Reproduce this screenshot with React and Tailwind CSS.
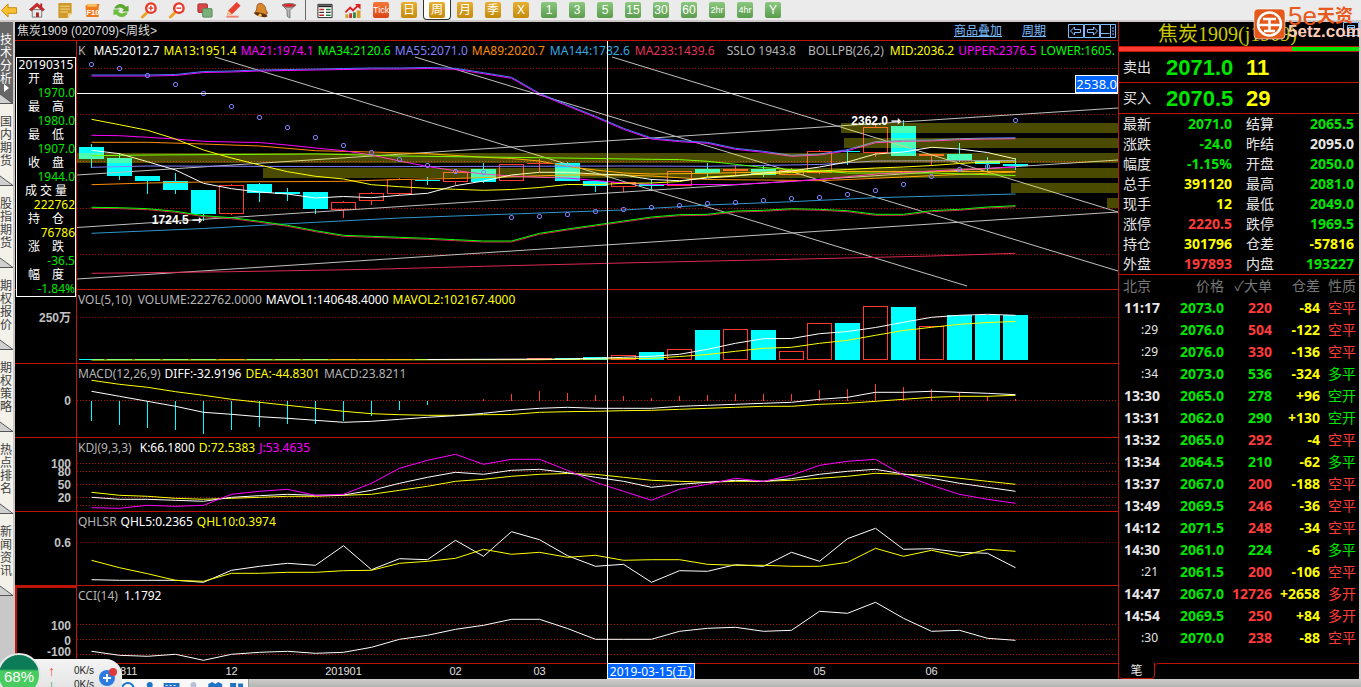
import clsx from 'clsx';

const cx = (i) => 91.5 + 28 * i;
const PLOT_X = 77;
const PLOT_W = 1041;

// values: a list of y, or of [index, y] where the series is sparse
const points = (values) =>
  values.map((v, i) => (Array.isArray(v) ? `${cx(v[0])},${v[1]}` : `${cx(i)},${v}`)).join(' ');

const UP = '#ff3b30';
const DOWN = '#00ffff';

// [direction, body top, body bottom, wick top, wick bottom]
const candles = [
  ['d', 147, 159, 144, 168], ['d', 158, 176, 153, 180], ['d', 176, 181, 176, 194], ['d', 181, 190, 173, 194],
  ['d', 190, 214, 190, 221], ['u', 185, 214, 184, 215], ['d', 184, 193, 183, 202], ['d', 192, 194, 188, 201],
  ['d', 192, 209, 192, 214], ['u', 202, 210, 201, 218], ['u', 193, 201, 192, 205], ['u', 179, 194, 178, 195],
  ['d', 180, 181, 177, 185], ['u', 172, 182, 171, 185], ['d', 169, 182, 163, 183], ['u', 164, 181, 164, 181],
  ['u', 163, 164, 159, 172], ['d', 163, 181, 162, 181], ['d', 181, 186, 181, 192], ['u', 182, 187, 182, 192],
  ['d', 184, 186, 179, 191], ['u', 171, 186, 171, 186], ['d', 169, 173, 163, 177], ['u', 169, 171, 165, 176],
  ['d', 169, 175, 166, 177], ['u', 170, 175, 168, 175], ['u', 151, 173, 150, 174], ['d', 151, 152, 149, 165],
  ['u', 127, 153, 125, 157], ['d', 126, 156, 120, 156], ['u', 154, 156, 154, 166], ['d', 154, 160, 143, 162],
  ['d', 161, 164, 157, 171], ['d', 164, 166, 158, 170],
];

const bands = [[841, 123], [844, 138], [77, 153], [263, 168], [1011, 183], [1107, 198]];

const trends = [
  [215, 57, 967, 286], [415, 57, 1118, 271], [612, 57, 1118, 212],
  [77, 175, 1118, 108], [77, 227.5, 1118, 160], [77, 279, 1118, 212],
];

const bollUpper = [75, 75, 75, 74.5, 71.5, 71, 70, 69.5, 69, 68.5, 68, 68, 67.5, 68.3, 72.7, 77.3, 93.3, 105, 116.3, 128.3, 138, 140.7, 142.3, 148.3, 151.3, 155.3, 154, 149.7, 141.7, 140.3, 140, 138.7, 138, 137.7];
const bollLower = [207.3, 207.7, 208.7, 211.3, 215.7, 217.7, 221.3, 225.3, 230.7, 235.3, 236.3, 237.3, 238.3, 239.7, 241, 241, 233.3, 229, 225, 221, 217, 214.7, 214.3, 211, 210.3, 208.7, 209.3, 210.7, 214.3, 214.3, 210.7, 209.3, 207, 205.7];

const mainLines = [
  ['#dc2850', [[0, 273.3], [5, 271.7], [10, 269.3], [14, 266.3], [20, 262.3], [25, 259.3], [30, 256], [33, 253.3]]],
  ['#2e96cc', [[0, 233.3], [4, 228.5], [8, 222.3], [11, 218], [14, 215], [19, 210], [22, 205], [25, 201.7], [28, 197.7], [33, 194]]],
  ['#ff8c00', [[0, 142.3], [2, 142.3], [4, 144], [6, 146], [8, 150.7], [10, 152], [12, 153.7], [14, 157.3], [15, 158.5], [16, 161], [17, 166.5], [18, 170], [19, 173], [20, 174], [22, 173.3], [25, 171.5], [29, 171.5], [33, 171.5]]],
  ['#ff8c00', [[0, 184.7], [2, 183], [4, 182], [8, 181.5], [9, 181.3], [11, 179.5], [13, 178.5], [15, 176.7], [17, 175], [19, 175], [20, 176], [22, 179.5], [24, 180], [26, 180.7], [28, 178.3], [30, 175.7], [33, 172]]],
  ['#8080ff', [[0, 167.3], [2, 166], [10, 166.7], [19, 166], [22, 166.3], [26, 164.5], [28, 161], [33, 160.5]]],
  ['#44ff00', [[0, 155.7], [2, 155], [8, 154], [9, 154.5], [11, 156], [16, 157.7], [20, 159.3], [21, 159.6], [22, 161.3], [23, 164.3], [24, 167.5], [25, 169.7], [26, 171], [27, 173], [30, 173], [33, 175.5]]],
  ['#ff00ff', [135.3, 135.7, 137.3, 139, 141.3, 142, 142.5, 145, 148, 150.7, 155, 161, 166.5, 170.7, 174, 176, 177.3, 178, 180.5, 183, 184.5, 184.5, 184.5, 184.5, 183, 181.5, 179.5, 176.7, 174, 172.5, 171, 169.5, 168.5, 167]],
  ['#ffff00', [119.3, 124.7, 130.3, 139, 150, 158, 165, 171.7, 176.3, 179, 184.7, 186.7, 188.3, 189.3, 190.3, 189.5, 187.5, 184.5, 184.7, 183.3, 183, 181.5, 177, 175.5, 174, 172.5, 171, 169.5, 168, 167, 165.5, 163.5, 162, 162]],
  ['#ffffff', [150.3, 153.7, 161.7, 170, 183.3, 188.7, 192, 194, 198, 196.5, 197.7, 195.3, 193.3, 185.7, 181, 175, 172.3, 172.3, 174, 175, 179.5, 180.7, 178, 176, 173, 171, 167, 162, 154, 152, 147.3, 149, 152.5, 159]],
  ['#dc2850', bollLower.map((y) => y + 1)],
  ['#00ff00', bollLower],
  ['#ff00ff', bollUpper.map((y) => y + 1)],
  ['#4878ff', bollUpper],
];

const sar = [64, 68, 75, 84, 93, 106, 117, 127, 137, 145, 152, 159, 165, 171, 172, 217, 216, 214, 211, 209, 207, 205, 203, 202, 200, 198, 197, 194, 190, 184, 176, 169, 166, 120];

const volumeTops = [359, 359, 359, 359, 359, 359, 359, 359, 359, 359, 359, 359, 359, 359, 359, 359, 358, 358, 357, 355, 352, 349, 330, 329, 330, 351, 323, 323, 306, 307, 326, 315, 315, 315];

const macdEnds = [421, 425, 428, 430, 434, 430, 427, 424, 424, 421, 416, 410, 405, 400, 399, 394, 391, 393, 395, 396, 398, 396, 395, 394, 394, 394, 390, 389, 384, 387, 389, 392, 396, 399];

const volLines = [
  ['#ffff00', [[0, 360], [16, 359.7], [20, 358.3], [21, 356.5], [22, 354.5], [23, 351.3], [24, 348.3], [25, 347.3], [26, 343.3], [27, 340.3], [28, 335.3], [29, 330.5], [30, 327.3], [31, 324.3], [32, 322.5], [33, 321.5]]],
  ['#ffffff', [[12, 359.5], [17, 359], [18, 358.3], [19, 357.3], [20, 356.3], [21, 354.3], [22, 349.3], [23, 343.3], [24, 338.7], [25, 338.5], [26, 333.7], [27, 331.5], [28, 327.5], [29, 322.3], [30, 317.3], [31, 315.3], [32, 314.3], [33, 315.3]]],
];

const macdLines = [
  ['#ffff00', [380.3, 384.3, 387.3, 391.7, 395.3, 399.3, 402.3, 405.3, 408.3, 411.3, 413.7, 414.7, 415.3, 415.3, 414.7, 414.5, 412.3, 411.7, 411.3, 410.7, 410.3, 409.3, 408.3, 407.3, 406.3, 406.3, 404.3, 403.3, 401.3, 399.3, 397.3, 396.3, 396.3, 395.3]],
  ['#ffffff', [391.3, 396.3, 401.3, 406.3, 412.3, 414.3, 416.7, 418.3, 420.3, 422.3, 421.3, 419.3, 417.3, 415.7, 413.3, 410.3, 408.3, 407.3, 408.3, 408.3, 408.3, 406.3, 405.3, 404.3, 403.3, 402.3, 399.3, 397.3, 392.3, 392.3, 391.3, 392.3, 393.3, 394.7]],
];

const kdjLines = [
  ['#ffff00', [492.3, 495.3, 496.3, 498.3, 499.3, 498.3, 497.3, 496.3, 496.3, 495.3, 494.3, 490.3, 486.3, 481.3, 479.3, 476.3, 474.3, 473.5, 474.3, 477.3, 480.3, 481.3, 482.3, 481.3, 481.3, 480.3, 478.3, 476.3, 473.3, 474.3, 475.3, 478.3, 481.3, 484.3]],
  ['#ffffff', [497.3, 499.3, 499.3, 500.3, 501.3, 497.3, 495.7, 494.3, 495.3, 495, 490.3, 483.3, 477.3, 472.3, 474.3, 470.3, 469.3, 472.7, 477.3, 481.3, 487.3, 484.3, 482.3, 480.3, 481.3, 478.7, 474.3, 471.3, 469.3, 474, 478.3, 483.3, 487.3, 491.3]],
  ['#ff00ff', [507.7, 508.3, 505.3, 506.3, 505.3, 494.3, 491.3, 489.3, 495.3, 494.3, 483.3, 468.3, 460.3, 454.3, 464.3, 459.3, 459.3, 470.3, 482.3, 491.3, 500.3, 489.3, 484.3, 478.3, 481.3, 475.3, 465.3, 461.3, 459.3, 475.3, 485.3, 494.3, 499.3, 503.3]],
];

const qhlLines = [
  ['#ffffff', [579.7, 580.3, 580.3, 580.3, 582.3, 570.3, 566.3, 563.3, 565.3, 545.7, 569.7, 558.7, 559.7, 540.3, 556.3, 531.7, 539.7, 555.7, 566.3, 564.3, 582.3, 570.7, 571.3, 564.7, 566.3, 552.3, 561.3, 538.7, 528.3, 549.3, 548.7, 552.3, 553.3, 567.7]],
  ['#ffff00', [560.3, 567.7, 573.7, 580.3, 581.3, 573.3, 573.3, 572.3, 572.3, 570.7, 570.3, 563.3, 561.3, 558.3, 549.3, 554.3, 552.3, 557.3, 555.3, 560.3, 559.7, 559.7, 564.3, 565.3, 565.3, 566.3, 566.3, 562.3, 548.3, 556.3, 550.3, 556.3, 549.3, 551.3]],
];

const cciLines = [
  ['#ffffff', [651.3, 655.3, 656.3, 654.3, 660.3, 654.3, 652.3, 651.3, 653.3, 652.3, 647.3, 639.3, 635.3, 629.3, 625.3, 619.3, 619.3, 628.5, 639.3, 639.3, 639.3, 631.3, 628.3, 627.3, 631.3, 630.3, 611.3, 613.3, 602.3, 618.3, 631.3, 630.3, 638.3, 640.3]],
];

const GREY = 'text-[#b4b4b4]';
const WHITE = 'text-white';
const YELLOW = 'text-[#ffff00]';
const PINK = 'text-[#ff00ff]';

function Lines({ series }) {
  return series.map(([color, values], i) => (
    <polyline key={i} points={points(values)} fill="none" stroke={color} vectorEffect="non-scaling-stroke" />
  ));
}

function Pane({ className, top, height, labels = [], grid, axis = [], axisClass, children, overlay }) {
  return (
    <section className={clsx('flex min-h-0 border-b border-[#c01408]', className)}>
      <div className={clsx('relative w-[62px] shrink-0 border-r border-[#c01408]', axisClass)}>
        {axis.map(([text, y]) => (
          <span
            key={text}
            className="absolute right-[5px] -translate-y-1/2 text-xs leading-3 font-bold text-[#c0c0c0]"
            style={{ top: `${((y - top) / height) * 100}%` }}
          >
            {text}
          </span>
        ))}
      </div>
      <div className="relative min-w-0 flex-1 overflow-hidden">
        <svg
          className="absolute inset-0 h-full w-full"
          viewBox={`${PLOT_X} ${top} ${PLOT_W} ${height}`}
          preserveAspectRatio="none"
        >
          {grid.map(([y, color]) => (
            <line key={y} x1="77" x2="1118" y1={y} y2={y} stroke={color} strokeDasharray="1 2" />
          ))}
          {children}
        </svg>
        <div className="relative flex h-5 gap-1 pl-px font-['Noto_Sans','Noto_Sans_CJK_SC',sans-serif] text-xs leading-5 whitespace-nowrap">
          {labels.map(([text, color]) => (
            <span key={text} className={color}>{text}</span>
          ))}
        </div>
        {overlay}
      </div>
    </section>
  );
}

const infoRows = [
  ['开　盘', '1970.0', 'text-[#00e600]'],
  ['最　高', '1980.0', 'text-[#00e600]'],
  ['最　低', '1907.0', 'text-[#00e600]'],
  ['收　盘', '1944.0', 'text-[#00e600]'],
  ['成 交 量', '222762', YELLOW],
  ['持　仓', '76786', YELLOW],
  ['涨　跌', '-36.5', 'text-[#00e600]'],
  ['幅　度', '-1.84%', 'text-[#00e600]'],
];

function CursorInfo() {
  return (
    <dl className="absolute top-[35px] left-px z-10 w-[60px] border border-white bg-black font-['Noto_Sans','Noto_Sans_CJK_SC',sans-serif] text-xs leading-[14px]">
      <dt className="text-center text-white">20190315</dt>
      {infoRows.map(([label, value, color]) => (
        <div key={label}>
          <dt className="text-center whitespace-nowrap text-white">{label}</dt>
          <dd className={clsx('text-right', color)}>{value}</dd>
        </div>
      ))}
    </dl>
  );
}

const months = [['201811', 1], ['12', 5], ['201901', 9], ['02', 13], ['03', 16], ['05', 26], ['06', 30]];

function Chart() {
  return (
    <main className="relative flex min-w-0 flex-1 flex-col border-r border-[#c01408] bg-black">
      <header className="flex h-[19px] shrink-0 items-center border-b border-[#c01408] text-xs leading-4 text-[#dcdcdc]">
        <h1 className="pl-0.5">焦炭1909 (020709)&lt;周线&gt;</h1>
        <nav className="ml-auto flex items-center text-[#7cbcff]">
          <a href="#overlay" className="mr-5 underline">商品叠加</a>
          <a href="#period" className="mr-[22px] underline">周期</a>
          <button aria-label="上一个" className="h-[14px] w-4">
            <svg viewBox="0 0 16 14" fill="none" stroke="currentColor"><path d="M.5.5h15v13H.5zM2.5 7l4-4v2.500h6v3h-6V11z" /></svg>
          </button>
          <button aria-label="下一个" className="h-[14px] w-4">
            <svg viewBox="0 0 16 14" fill="none" stroke="currentColor"><path d="M.5.5h15v13H.5zM13.500 7l-4-4v2.500h-6v3h6V11z" /></svg>
          </button>
          <button aria-label="布局" className="mr-0.5 h-[14px] w-4">
            <svg viewBox="0 0 16 14" fill="none" stroke="currentColor"><path d="M.5.5h15v13H.5zM.5 9.500h9M10.500 0v14" /><path d="M13 3v9" strokeDasharray="2 1" /></svg>
          </button>
        </nav>
      </header>

      <CursorInfo />

      <div className="relative flex min-h-0 flex-1 flex-col">
        <Pane
          className="flex-[248]"
          top={41}
          height={248}
          labels={[
            ['K', `${GREY} mr-1`], ['MA5:2012.7', WHITE], ['MA13:1951.4', YELLOW], ['MA21:1974.1', PINK],
            ['MA34:2120.6', 'text-[#00ff00]'], ['MA55:2071.0', 'text-[#8080ff]'], ['MA89:2020.7', 'text-[#ff8c00]'],
            ['MA144:1782.6', 'text-[#36a8e0] ml-px'], ['MA233:1439.6', 'text-[#e6325a] mr-2 ml-px'], ['SSLO 1943.8', `${GREY} mr-2`],
            ['BOLLPB(26,2)', `${GREY} mr-0.5`], ['MID:2036.2', YELLOW], ['UPPER:2376.5', PINK], ['LOWER:1605.', 'text-[#00ff00]'],
          ]}
          grid={[[68.5, '#c00000'], [114.5, '#c00000'], [161.5, '#c00000'], [208.5, '#c00000'], [254.5, '#c00000']]}
          overlay={
            <>
              <div className="absolute top-[21%] right-0 h-px w-full bg-white" />
              <span className="absolute right-0 bottom-[79%] border border-white bg-[#0064ff] font-['Noto_Sans',sans-serif] text-[13px] leading-4 text-white">
                2538.0
              </span>
              <span className="absolute top-[69%] left-[7%] pl-0.5 text-xs leading-4 font-bold text-white">1724.5 ⇾</span>
              <span className="absolute top-[29%] left-[74%] pl-1 text-xs leading-4 font-bold text-white">2362.0 ⇾</span>
            </>
          }
        >
          {candles.map(([dir, t, b, wt, wb], i) => {
            const color = dir === 'u' ? UP : DOWN;
            return (
              <g key={i} shapeRendering="crispEdges" stroke={color}>
                {wt < t && <path d={`M${cx(i)} ${wt}V${t}`} />}
                {wb > b && <path d={`M${cx(i)} ${b}V${wb}`} />}
                {dir === 'u' && b - t > 2 ? (
                  <rect x={cx(i) - 12} y={t + 0.5} width="24" height={b - t - 1} fill="none" />
                ) : (
                  <rect x={cx(i) - 12.5} y={t} width="25" height={b - t} fill={color} stroke="none" />
                )}
              </g>
            );
          })}
          {trends.map(([x1, y1, x2, y2]) => (
            <line key={`${x1}-${y1}`} x1={x1} y1={y1} x2={x2} y2={y2} stroke="#c0c0c0" />
          ))}
          <Lines series={mainLines} />
          {bands.map(([x, y]) => (
            <rect key={y} x={x} y={y} width={1118 - x} height="10" fill="#ffff00" fillOpacity="0.29" />
          ))}
          {sar.map((y, i) => (
            <rect key={i} x={cx(i) - 2} y={y - 1.5} width="4" height="4" rx="1.5" fill="none" stroke="#8080ff" />
          ))}
        </Pane>

        <Pane
          className="flex-[73]"
          top={290}
          height={73}
          labels={[['VOL(5,10)', `${GREY} mr-0.5`], ['VOLUME:222762.0000', GREY], ['MAVOL1:140648.4000', WHITE], ['MAVOL2:102167.4000', YELLOW]]}
          grid={[[317.5, '#900000']]}
          axis={[['250万', 318]]}
        >
          <g shapeRendering="crispEdges">
            {volumeTops.map((y, i) =>
              candles[i][0] === 'u' && y < 357 ? (
                <rect key={i} x={cx(i) - 12} y={y + 0.5} width="24" height={359 - y} fill="none" stroke={UP} />
              ) : (
                <rect key={i} x={cx(i) - 12.5} y={y} width="25" height={360 - y} fill={candles[i][0] === 'u' ? UP : DOWN} />
              ),
            )}
          </g>
          <Lines series={volLines} />
        </Pane>

        <Pane
          className="flex-[73]"
          top={364}
          height={73}
          labels={[['MACD(12,26,9)', GREY], ['DIFF:-32.9196', WHITE], ['DEA:-44.8301', YELLOW], ['MACD:23.8211', GREY]]}
          grid={[[400.5, '#c01408']]}
          axis={[['0', 401]]}
        >
          {macdEnds.map((y, i) => (
            <line key={i} x1={cx(i)} x2={cx(i)} y1="400.5" y2={y} stroke={y > 400.5 ? DOWN : UP} shapeRendering="crispEdges" />
          ))}
          <Lines series={macdLines} />
        </Pane>

        <Pane
          className="flex-[73]"
          top={438}
          height={73}
          labels={[['KDJ(9,3,3)', `${GREY} mr-1`], ['K:66.1800', WHITE], ['D:72.5383', YELLOW], ['J:53.4635', PINK]]}
          grid={[[463.5, '#c01408'], [471.5, '#c01408'], [484.5, '#c01408'], [497.5, '#c01408'], [505.5, '#c01408']]}
          axis={[['100', 464], ['80', 472], ['50', 485], ['20', 498]]}
        >
          <Lines series={kdjLines} />
        </Pane>

        <Pane
          className="flex-[73]"
          top={512}
          height={73}
          labels={[['QHLSR', GREY], ['QHL5:0.2365', WHITE], ['QHL10:0.3974', YELLOW]]}
          grid={[[542.5, '#900000']]}
          axis={[['0.6', 543]]}
        >
          <Lines series={qhlLines} />
        </Pane>

        <Pane
          className="flex-[77]"
          top={586}
          height={77}
          labels={[['CCI(14)', `${GREY} mr-0.5`], ['1.1792', WHITE]]}
          grid={[[624.5, '#c01408'], [639.5, '#c01408'], [654.5, '#c01408']]}
          axis={[['100', 625], ['0', 640], ['-100', 652]]}
          axisClass="border-t-2 border-l-2"
        >
          <Lines series={cciLines} />
        </Pane>

        <div className="flex flex-[15]">
          <div className="w-[62px] shrink-0" />
          <div className="relative flex-1">
            {months.map(([text, i]) => (
              <span
                key={text}
                className="absolute top-0 -translate-x-1/2 font-['Liberation_Sans',sans-serif] text-[11px] leading-[15px] text-[#e0e0e0]"
                style={{ left: `${((cx(i) - PLOT_X) / PLOT_W) * 100}%` }}
              >
                {text}
              </span>
            ))}
          </div>
        </div>

        {/* crosshair column, over every pane */}
        <div className="pointer-events-none absolute inset-y-0 right-0 left-[62px]">
          <div className="absolute inset-y-0 left-[50.900%] w-px bg-white" />
          <span className="absolute bottom-0 left-[50.900%] h-4 border border-white bg-[#0064ff] px-0.5 font-['Noto_Sans','Noto_Sans_CJK_SC',sans-serif] text-xs leading-[15px] whitespace-nowrap text-white">
            2019-03-15(五)
          </span>
        </div>
      </div>
    </main>
  );
}

const R = 'text-[#ff3b3b]';
const G = 'text-[#00e600]';

const quotes = [
  ['最新', '2071.0', G, '结算', '2065.5', G],
  ['涨跌', '-24.0', G, '昨结', '2095.0', 'text-[#e6e6e6]'],
  ['幅度', '-1.15%', G, '开盘', '2050.0', G],
  ['总手', '391120', YELLOW, '最高', '2081.0', G],
  ['现手', '12', YELLOW, '最低', '2049.0', G],
  ['涨停', '2220.5', R, '跌停', '1969.5', G],
  ['持仓', '301796', YELLOW, '仓差', '-57816', YELLOW],
  ['外盘', '197893', R, '内盘', '193227', G],
];

const trades = [
  ['11:17', '2073.0', '220', '-84', '空平', R],
  [':29', '2076.0', '504', '-122', '空平', R],
  [':29', '2076.0', '330', '-136', '空平', R],
  [':34', '2073.0', '536', '-324', '多平', G],
  ['13:30', '2065.0', '278', '+96', '空开', G],
  ['13:31', '2062.0', '290', '+130', '空开', G],
  ['13:32', '2065.0', '292', '-4', '空平', R],
  ['13:34', '2064.5', '210', '-62', '多平', G],
  ['13:37', '2067.0', '200', '-188', '空平', R],
  ['13:49', '2069.5', '246', '-36', '空平', R],
  ['14:12', '2071.5', '248', '-34', '空平', R],
  ['14:30', '2061.0', '224', '-6', '多平', G],
  [':21', '2061.5', '200', '-106', '空平', R],
  ['14:47', '2067.0', '12726', '+2658', '多开', R],
  ['14:54', '2069.5', '250', '+84', '多开', R],
  [':30', '2070.0', '238', '-88', '空平', R],
];

function OrderLine({ label, price, lots }) {
  return (
    <div className="flex h-[31px] shrink-0 items-center border-b border-[#c01408] pl-1">
      <span className="w-[43px] text-sm">{label}</span>
      <span className="w-20 font-['Liberation_Sans',sans-serif] text-[22px] font-bold text-[#00e600]">{price}</span>
      <span className="font-['Liberation_Sans',sans-serif] text-[22px] font-bold text-[#ffff00]">{lots}</span>
    </div>
  );
}

function QuotePanel() {
  return (
    <aside className="flex w-60 shrink-0 flex-col bg-black text-[#e6e6e6]">
      <h2 className="h-6 shrink-0 pl-[39px] font-['Liberation_Serif','Noto_Sans_CJK_SC',serif] text-xl leading-6 whitespace-nowrap text-[#c8c800]">
        焦炭1909(j1909)
      </h2>
      <div className="flex h-1.5 shrink-0 border-y border-[#c01408]">
        <div className="flex-[173] bg-[#ff3b30]" />
        <div className="flex-[67] bg-[#00e600]" />
      </div>
      <OrderLine label="卖出" price="2071.0" lots="11" />
      <OrderLine label="买入" price="2070.5" lots="29" />

      <div className="shrink-0 border-b border-[#c01408]">
        <table className="w-full table-fixed text-sm leading-5">
          <tbody>
            {quotes.map(([a, av, ac, b, bv, bc]) => (
              <tr key={a} className="h-5">
                <th className="w-10 p-0 pl-1 text-left font-normal">{a}</th>
                <td className={clsx("w-[73px] p-0 text-right font-['Noto_Sans',sans-serif] font-bold", ac)}>{av}</td>
                <th className="w-[43px] p-0 pl-[14px] text-left font-normal">{b}</th>
                <td className={clsx("p-0 pr-[5px] text-right font-['Noto_Sans',sans-serif] font-bold", bc)}>{bv}</td>
              </tr>
            ))}
          </tbody>
        </table>
      </div>

      <table className="w-full table-fixed text-right text-sm leading-[22px]">
        <thead>
          <tr className="h-[22px] whitespace-nowrap text-[#787878]">
            <th className="w-[41px] p-0 pl-1 text-left font-normal">北京</th>
            <th className="w-16 p-0 font-normal">价格</th>
            <th className="w-12 p-0 font-normal">✓大单</th>
            <th className="w-12 p-0 font-normal">仓差</th>
            <th className="p-0 pr-[3px] font-normal">性质</th>
          </tr>
        </thead>
        <tbody className="font-['Noto_Sans','Noto_Sans_CJK_SC',sans-serif] font-bold">
          {trades.map(([time, price, lots, diff, kind, color], i) => (
            <tr key={i} className="h-[22px]">
              <td className={clsx('p-0', time[0] === ':' && 'pr-0.5 text-xs leading-[22px] font-normal')}>{time}</td>
              <td className="p-0 text-[#00e600]">{price}</td>
              <td className={clsx('p-0', color)}>{lots}</td>
              <td className="p-0 text-[#ffff00]">{diff}</td>
              <td className={clsx('p-0 pr-[3px] font-normal', color)}>{kind}</td>
            </tr>
          ))}
        </tbody>
      </table>

      <div className="mt-auto flex h-4 shrink-0">
        <button className="w-9 rounded-b border-r border-b border-[#c01408] text-xs leading-4">笔</button>
        <div className="flex-1 rounded-tl border-t border-[#c01408]" />
      </div>
    </aside>
  );
}

const sideTabs = ['技术分析', '国内期货', '股指期货', '期权报价', '期权策略', '热点排名', '新闻资讯'];

function SideTabs() {
  return (
    <nav className="flex w-[15px] shrink-0 flex-col overflow-hidden border-r-2 border-[#cfc6c6] bg-[#c8c8c8]">
      {sideTabs.map((tab, i) => (
        <button
          key={tab}
          className={clsx(
            'relative h-[82px] w-full shrink-0 overflow-hidden',
            i === 0 ? 'bg-[#666666] text-white' : 'bg-[#f2f1ea] text-[#404040]',
          )}
        >
          <span className="block w-3 pb-1.5 text-xs leading-[13px] break-all">{tab}</span>
          <svg className="absolute bottom-0 left-0 h-[11px] w-full" viewBox="0 0 13 11" preserveAspectRatio="none">
            <path d="M0 1V11H13z" fill="#d0d0d0" />
            <path d="M0 1L13 10.500H0" fill="none" stroke="#555" />
          </svg>
          {i === 0 && (
            <svg className="absolute bottom-3 left-1 h-2 w-1.5" viewBox="0 0 6 8"><path d="M0 0l5 4-5 4z" fill="#fff" /></svg>
          )}
        </button>
      ))}
    </nav>
  );
}

const tools = [
  ['后退', <path key="p" d="M1 9l7-7v4h9v6H8v4z" fill="#f8c030" stroke="#c88810" />],
  ['首页', <g key="p"><path d="M4 8h10v8H4z" fill="#e8e8e8" stroke="#777" /><path d="M9 1l8 7-2 1.500-6-5-6 5L1 8z" fill="#d02828" stroke="#901010" strokeWidth=".6" /><path d="M12.500 1.500h2v4h-2zM8 11h3v5H8z" fill="#b02020" /></g>],
  ['公告', <g key="p"><path d="M2 1h14v11l-4 5H2z" fill="#d09a28" /><path d="M4 4.500h10M4 7.500h10M4 10.500h8" stroke="#f4d890" /><path d="M16 12h-4v5z" fill="#f4d890" /></g>],
  ['F10', <g key="p"><path d="M1 4l3-2h12l-1 3v11H2z" fill="#f07a20" /><path d="M3 2h10v3H3z" fill="#f8c060" /><text x="9" y="13.500" fontSize="8" fontWeight="700" fill="#fff" textAnchor="middle">F10</text></g>],
  ['刷新', <g key="p"><path d="M2 7c1-5 9-7 12-2l3-1v6h-7l2-2C10 6 7 5 6 7z" fill="#5aa832" /><path d="M16 11c-1 5-9 7-12 2l-3 1V8h7l-2 2c2 2 5 3 6 1z" fill="#6cbc40" /></g>],
  ['放大', <g key="p"><path d="M2 16l5-5" stroke="#f0a020" strokeWidth="3" strokeLinecap="round" /><circle cx="11" cy="6.500" r="5" fill="#fff" stroke="#e83828" strokeWidth="2.500" /><path d="M8.500 6.500h5M11 4v5" stroke="#e83828" strokeWidth="1.500" /></g>],
  ['缩小', <g key="p"><path d="M2 16l5-5" stroke="#f0a020" strokeWidth="3" strokeLinecap="round" /><circle cx="11" cy="6.500" r="5" fill="#fff" stroke="#e83828" strokeWidth="2.500" /><path d="M8.500 6.500h5" stroke="#e83828" strokeWidth="1.500" /></g>],
  ['叠加', <g key="p"><rect x="1.500" y="2" width="10" height="9" rx="1" fill="#d84848" stroke="#a02828" /><rect x="6.500" y="7" width="10" height="9" rx="1" fill="#78b078" stroke="#588858" /></g>],
  ['画线', <g key="p"><path d="M3 14l1-5 9-9 4 4-9 9z" fill="#e84030" /><path d="M3 14l1-5 4 4z" fill="#f4c888" /><path d="M2 15.500h13" stroke="#f08070" strokeWidth="2" /></g>],
  ['预警', <g key="p"><path d="M6 2c4-2 8 2 8 6l2 4-4 3-10-3 2-3c1-3 0-5 2-7z" fill="#d88828" stroke="#884010" strokeWidth=".8" /><ellipse cx="9" cy="13.500" rx="7" ry="2" fill="#603010" transform="rotate(14 9 13.500)" /><circle cx="8" cy="14" r="1.700" fill="#f8c850" /></g>],
  ['筛选', <g key="p"><path d="M2 3l5 6v6l3 2V9l6-6z" fill="#b8b8b8" stroke="#777" /><ellipse cx="9" cy="3.500" rx="7" ry="2" fill="#e02828" stroke="#777" /></g>],
];

const tools2 = [
  ['报表', <g key="p"><path d="M1.500 2.500h15v14h-15z" fill="#fff" stroke="#222" /><path d="M2 4.500h14" stroke="#222" strokeWidth="2" /><path d="M3 8h5M3 14h5" stroke="#c02020" strokeWidth="1.500" /><path d="M10 8h5M10 14h5" stroke="#208040" strokeWidth="1.500" /><path d="M3 11h5M10 11h5" stroke="#333" strokeWidth="1.500" /></g>],
  ['走势', <g key="p"><path d="M1 13h3v4H1zM13 9h4v8h-4z" fill="#d8a020" /><path d="M5 12h3v5H5z" fill="#d03030" /><path d="M9 11h3v6H9z" fill="#308848" /><path d="M1 11l5-5 3 3 6-6" fill="none" stroke="#e02020" strokeWidth="2" /><path d="M11 2h6v6z" fill="#e02020" /></g>],
];

const periods = ['日', '周', '月', '季', 'X', '1', '3', '5', '15', '30', '60', '2hr', '4hr', 'Y'];

function Tool({ label, children }) {
  return (
    <button aria-label={label} className="flex w-7 shrink-0 items-center justify-center">
      <svg className="h-[17px] w-[18px]" viewBox="0 0 18 18">{children}</svg>
    </button>
  );
}

function Toolbar() {
  return (
    <div className="flex h-[22px] shrink-0 overflow-hidden border-b-2 border-[#cfc8c8] bg-[#ebebeb]">
      <div className="-ml-[5px] flex">
        {tools.map(([label, icon]) => <Tool key={label} label={label}>{icon}</Tool>)}
      </div>
      <div className="mr-[5px] ml-0.5 w-px bg-[#666666]" />
      {tools2.map(([label, icon]) => <Tool key={label} label={label}>{icon}</Tool>)}
      <button className="flex w-7 shrink-0 items-center justify-center">
        <span className="h-4 w-4 rounded-xs bg-gradient-to-b from-[#f47838] to-[#dc4414] text-center font-['Liberation_Sans',sans-serif] text-[9px] leading-4 text-white">Tick</span>
      </button>
      {periods.map((p, i) => (
        <button
          key={p}
          className={clsx(
            'flex w-7 shrink-0 items-center justify-center',
            p === '周' && 'rounded-b border border-t-0 border-[#333333] bg-white',
          )}
        >
          <span
            className={clsx(
              'h-4 w-4 rounded-xs bg-gradient-to-b text-center text-white',
              i < 5 ? 'from-[#e8b030] to-[#c48a08]' : 'from-[#8cc880] to-[#5a9c4c]',
              p.length === 3 ? 'text-[9px] leading-4' : 'text-xs leading-4',
            )}
          >
            {p}
          </span>
        </button>
      ))}
    </div>
  );
}

function SiteLogo() {
  return (
    <div className="absolute top-2 right-0 z-20 flex items-center gap-0.5">
      <svg className="h-8 w-[33px]" viewBox="0 0 33 32">
        <rect x="1" y="1" width="31" height="30" rx="4" fill="#e4581a" stroke="#fff" strokeOpacity=".6" />
        <circle cx="16.500" cy="16" r="11.500" fill="none" stroke="#fff" strokeWidth="2.500" />
        <path d="M10 11h13M6 17h21M16.500 11v12M11 23h11" stroke="#fff" strokeWidth="2.500" />
      </svg>
      <div className="w-[73px] whitespace-nowrap">
        <div className="flex items-center font-['Liberation_Sans','Noto_Sans_CJK_SC',sans-serif] text-lg leading-4 font-bold text-[#e8591c]">
          <span className="text-[26px] leading-4 font-normal">5e</span>天资
        </div>
        <div className="font-['Liberation_Sans',sans-serif] text-[17px] leading-4 font-bold text-[#ffcdb8]">5etz.com</div>
      </div>
      <svg className="absolute right-0.5 bottom-1 -z-10 h-[14px] w-4" viewBox="0 0 16 14" fill="none" stroke="#7cbcff">
        <path d="M.5.5h15v13H.5zM4.500 3.500h7v7h-7zM4.500 5.500h7" />
      </svg>
    </div>
  );
}

function SpeedWidget() {
  return (
    <div className="absolute bottom-0 left-0 z-20 h-[34px] w-[250px] overflow-hidden">
      <div className="absolute bottom-0 left-[114px] h-2 w-[135px] border-r border-[#999999] bg-[#f8f8f8]">
        <svg className="h-2 w-full" viewBox="0 0 135 8" fill="none">
          <circle cx="14" cy="10" r="6" stroke="#1f74c8" strokeWidth="2" />
          <circle cx="36" cy="6" r="3" fill="#1f74c8" />
          <path d="M50 4h16v4H50z" fill="#1f74c8" />
          <path d="M52 6.500h12" stroke="#fff" strokeDasharray="2 2" />
          <circle cx="80" cy="6" r="3" fill="#b8c0d8" />
          <path d="M95 8V5l4-2 3 2 3-2 4 2v3z" fill="#1f74c8" />
          <path d="M117 4h6v4h-6zM125 4.500h5V8h-5" fill="#1f74c8" />
        </svg>
      </div>
      <div className="absolute top-1.5 left-2 h-[42px] w-[114px] rounded-tr-2xl bg-gradient-to-b from-[#f4f4f4] to-[#dddddd]" />
      <div className="absolute top-0 left-[-3px] h-[44px] w-[44px] rounded-full border-2 border-[#e8e8e8] bg-gradient-to-b from-[#0c7c58] from-35% to-[#48cc60] to-40% text-center font-['Liberation_Sans',sans-serif] text-[15px] leading-[43px] text-white">
        68%
      </div>
      <div className="absolute top-[11px] left-12 font-['Liberation_Sans',sans-serif] text-[10px] leading-[14px] text-[#222222]">
        <div className="flex"><b className="w-[26px] text-sm leading-[14px] text-[#e85030]">↑</b>0K/s</div>
        <div className="flex"><b className="w-[26px] text-sm leading-[14px] text-[#18984c]">↓</b>0K/s</div>
      </div>
      <svg className="absolute top-[14px] left-[98px] h-5 w-5" viewBox="0 0 20 20">
        <circle cx="9" cy="11" r="8" fill="#2c7ce0" />
        <path d="M9 7v8M5 11h8" stroke="#fff" strokeWidth="1.800" />
        <circle cx="15" cy="5" r="4" fill="#e03838" />
      </svg>
    </div>
  );
}

export default function App() {
  return (
    <div className="relative flex h-screen min-h-[600px] w-full flex-col overflow-hidden bg-black font-['Liberation_Sans','Noto_Sans_CJK_SC',sans-serif]">
      <Toolbar />
      <div className="flex min-h-0 flex-1">
        <SideTabs />
        <Chart />
        <QuotePanel />
        <div className="w-0.5 shrink-0 bg-[#d8cccc]" />
      </div>
      <footer className="h-2 shrink-0 bg-gradient-to-b from-[#d0cccc] to-[#b4b6b4]" />
      <SiteLogo />
      <SpeedWidget />
    </div>
  );
}
